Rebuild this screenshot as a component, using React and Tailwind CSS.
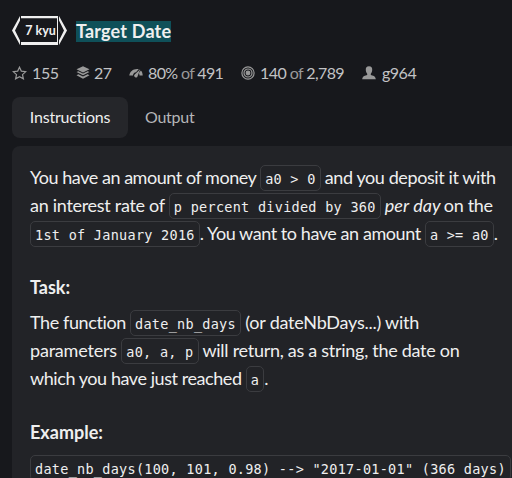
function Code({ children }) {
  return (
    <code className="inline-block h-[26px] shrink-0 rounded-[5px] border border-[#3b3c40] px-1 align-middle font-['DejaVu_Sans_Mono',monospace] text-[13.5px] leading-[27px] tracking-[0.28px] text-[#efefef]">
      {children}
    </code>
  );
}

function Line({ children }) {
  return <div className="flex h-7 items-center whitespace-pre [&>span]:mb-[2px]">{children}</div>;
}

function Rank() {
  return (
    <div className="relative flex h-[29px] w-[55px] items-center justify-center pl-[2px] pt-[2px] text-[12.5px] font-bold text-[#efefef]">
      <svg className="absolute inset-0" width="55" height="29" viewBox="0 0 55 29" fill="#efefef">
        <path d="M9 0H46V2.2H9ZM9 26H46V29H9ZM45 0H46V29H45Z" />
        <path d="M8 0V4.5L3 14.5L8 24.5V29L0 14.5ZM47 0V4.5L52 14.5L47 24.5V29L55 14.5Z" />
      </svg>
      <span className="relative">7 kyu</span>
    </div>
  );
}

function Star() {
  return (
    <svg width="15" height="14" viewBox="0 0 15 14" fill="none" stroke="#999" strokeWidth="1.2">
      <path d="M7.5 1.2L9.3 5.1L13.8 5.6L10.5 8.6L11.4 12.9L7.5 10.8L3.6 12.9L4.5 8.6L1.2 5.6L5.7 5.1Z" />
    </svg>
  );
}

function Layers() {
  return (
    <svg width="14" height="14" viewBox="0 0 14 14" fill="#999">
      <path d="M7 .3L13.5 3.3L7 6.4L.5 3.3ZM.5 6L2.4 5.2L7 7.4L11.6 5.2L13.5 6L7 9.3ZM.5 9.2L2.4 8.3L7 10.5L11.6 8.3L13.5 9.2L7 12.7Z" />
    </svg>
  );
}

function Gauge() {
  return (
    <svg width="14" height="10" viewBox="0 0 14 10" fill="#999">
      <path d="M.3 7.6C.8 3.2 4.7.2 9.8 1.1L7 4.3C5.3 4.5 4.2 5.7 3.9 7.6ZM11.9 2.4C13.1 3.8 13.7 5.4 13.7 7.6H10.5C10.5 6.5 10.3 5.7 9.9 5Z" />
      <path d="M11.2 1.2L8.6 8.2A1.7 1.7 0 1 1 5.7 6.6Z" />
    </svg>
  );
}

function Target() {
  return (
    <svg width="14" height="14" viewBox="0 0 14 14" fill="none" stroke="#999" strokeWidth="1.2">
      <circle cx="7" cy="7" r="6.1" />
      <circle cx="7" cy="7" r="4" />
      <circle cx="7" cy="7" r="1.8" fill="#999" />
    </svg>
  );
}

function Person() {
  return (
    <svg width="14" height="14" viewBox="0 0 14 14" fill="#999">
      <path d="M7 .3C9.4.3 10.4 1.8 10.2 4C10.1 5.8 9.5 7 8.8 7.8V9C10.8 9.5 13.4 10 13.8 13.2H.2C.6 10 3.2 9.5 5.2 9V7.8C4.5 7 3.9 5.8 3.8 4C3.6 1.8 4.6.3 7 .3Z" />
    </svg>
  );
}

export default function App() {
  return (
    <div className="h-[478px] w-[512px] overflow-hidden bg-[#17181c] pl-3 pt-4 font-['Lato',sans-serif] text-[#efefef]">
      <header className="flex h-[29px] items-center">
        <Rank />
        <h1 className="ml-[9px] mt-[2px] h-[21px] bg-[#0f5059] text-[18px] font-bold leading-[21px] tracking-[0.18px]">Target Date</h1>
      </header>
      <div className="mt-[16px] flex h-6 items-center whitespace-pre text-[16px] text-[#c2c3c5]">
        <div className="flex w-[64px] items-center gap-[5px]"><Star /><span className="tracking-[-0.35px]">155</span></div>
        <div className="flex w-[53px] items-center gap-[4px]"><Layers /><span className="tracking-[-0.5px]">27</span></div>
        <div className="flex w-[112px] items-center gap-[5px]"><Gauge /><span className="tracking-[-0.65px]">80% <span className="text-[#999]">of</span> 491</span></div>
        <div className="flex w-[121px] items-center gap-[5px]"><Target /><span className="tracking-[-0.58px]">140 <span className="text-[#999]">of</span> 2,789</span></div>
        <div className="flex items-center gap-[6px]"><Person /><span className="tracking-[-0.5px]">g964</span></div>
      </div>
      <nav className="mt-[12px] flex h-[41px] text-[16px]">
        <div className="flex w-[116px] items-center justify-center rounded-lg bg-[#25262a] pb-px tracking-[-0.2px]">Instructions</div>
        <div className="flex items-center pb-px pl-[17px] tracking-[-0.25px] text-[#b5b6b8]">Output</div>
      </nav>
      <main className="mt-2 h-[332px] rounded-tl-lg bg-[#222327] pl-[18px] pt-[18px] text-[18px]">
        <Line>
          <span className="tracking-[-0.46px]">You have an amount of money </span>
          <Code>{"a0 > 0"}</Code>
          <span className="tracking-[-0.4px]"> and you deposit it with</span>
        </Line>
        <Line>
          <span className="tracking-[-0.29px]">an interest rate of </span>
          <Code>p percent divided by 360</Code>
          <span><em className="ml-1 tracking-[0.1px]">per day</em></span>
          <span className="ml-[3px] tracking-[-0.35px]">on the</span>
        </Line>
        <Line>
          <Code>1st of January 2016</Code>
          <span className="tracking-[-0.43px]">. You want to have an amount </span>
          <Code>{"a >= a0"}</Code>
          <span>.</span>
        </Line>
        <h2 className="mt-[25px] h-7 font-bold leading-7">Task:</h2>
        <div className="mt-2">
          <Line>
            <span className="tracking-[-0.4px]">The function </span>
            <Code>date_nb_days</Code>
            <span className="tracking-[-0.23px]"> (or dateNbDays...) with</span>
          </Line>
          <Line>
            <span className="tracking-[-0.2px]">parameters </span>
            <Code>a0, a, p</Code>
            <span className="tracking-[-0.28px]"> will return, as a string, the date on</span>
          </Line>
          <Line>
            <span className="tracking-[-0.43px]">which you have just reached </span>
            <Code>a</Code>
            <span>.</span>
          </Line>
        </div>
        <h2 className="mt-[25px] h-7 font-bold leading-7">Example:</h2>
        <div className="mt-[9px] flex whitespace-pre">
          <Code>{'date_nb_days(100, 101, 0.98) --> "2017-01-01" (366 days)'}</Code>
        </div>
      </main>
    </div>
  );
}
